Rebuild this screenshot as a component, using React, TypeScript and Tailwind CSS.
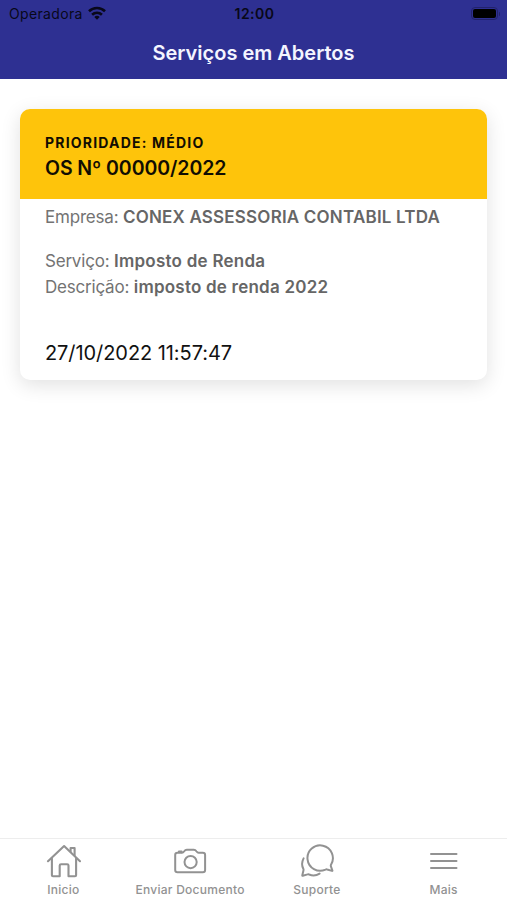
import React from "react"

const tabs = [
    { label: "Inicio", icon: <HomeIcon /> },
    { label: "Enviar Documento", icon: <CameraIcon /> },
    { label: "Suporte", icon: <ChatIcon /> },
    { label: "Mais", icon: <MenuIcon /> },
]

function HomeIcon() {
    return (
        <svg width="36" height="36" viewBox="0 0 36 36" fill="none" stroke="currentColor" strokeWidth="2.1" strokeLinecap="round" strokeLinejoin="round">
            <path d="M3 18.2 19.1 3 35 18.2" />
            <path d="M25.6 8.5V5h4v7.5" />
            <path d="M6.9 15.5v16.7c0 .7.4 1.1 1.1 1.1h6.7V22.6c0-.9.5-1.4 1.4-1.4h6c.9 0 1.4.5 1.4 1.4v10.7h6.5c.7 0 1.1-.4 1.1-1.1V15.5" />
        </svg>
    )
}

function CameraIcon() {
    return (
        <svg width="36" height="36" viewBox="0 0 36 36" fill="none" stroke="currentColor" strokeWidth="2" strokeLinecap="round" strokeLinejoin="round">
            <path d="M5.5 9.8h4.5c1.1 0 1.5-.5 2.2-1.5.8-1.2 1.4-1.6 2.6-1.6h7c1.2 0 1.8.4 2.6 1.6.7 1 1.1 1.5 2.2 1.5h4.2c1.5 0 2.3.8 2.3 2.3v14.8c0 1.5-.8 2.3-2.3 2.3H5.5c-1.5 0-2.3-.8-2.3-2.3V12.1c0-1.5.8-2.3 2.3-2.3Z" />
            <path d="M6.9 9.2V8.5h2.7v.7" />
            <circle cx="18.6" cy="19.1" r="6.1" />
        </svg>
    )
}

function ChatIcon() {
    return (
        <svg width="36" height="36" viewBox="0 0 36 36" fill="none" stroke="currentColor" strokeWidth="2" strokeLinecap="round" strokeLinejoin="round">
            <path d="M32 21.7a12.7 12.7 0 1 0-5.5 4.9c.6-.3 1.1-.3 1.7-.1l4.8 1.4c.3.1.5-.1.4-.4l-1.5-4.2c-.2-.6-.2-1 .1-1.6Z" />
            <path d="M4.6 15.4c-1.700 3.300-1.900 7.200-.3 10.300.3.600.4 1 .2 1.600L3.300 32.300c-.1.400.1.600.5.500l4.700-1.400c.6-.2 1.100-.2 1.700.1 3.400 1.400 7.200 1.100 10.400-.9" />
        </svg>
    )
}

function MenuIcon() {
    return (
        <svg width="36" height="36" viewBox="0 0 36 36" fill="none" stroke="currentColor" strokeWidth="2" strokeLinecap="round">
            <path d="M5 11h25.5M5 18h25.5M5 25h25.5" />
        </svg>
    )
}

function WifiIcon() {
    return (
        <svg className="ml-[5px] -mt-[2px]" width="18" height="14" viewBox="0 0 18 14" fill="none" stroke="currentColor" strokeWidth="2.6">
            <path d="M1 5.3a11.5 11.5 0 0 1 16 0" />
            <path d="M4.1 8.7a7 7 0 0 1 9.8 0" />
            <path d="M9 13.8 6.3 11.1a3.8 3.8 0 0 1 5.4 0Z" fill="currentColor" stroke="none" />
        </svg>
    )
}

function StatusBar() {
    return (
        <div className="grid h-[27px] grid-cols-3 items-center pr-[7px] pl-[9px] text-[14px] text-[#080819]">
            <div className="flex items-center">
                <span className="tracking-[0.34px]">Operadora</span>
                <WifiIcon />
            </div>
            <span className="text-center font-semibold tracking-[0.45px]">12:00</span>
            {/* Bateria */}
            <div className="flex items-center justify-end">
                <div className="h-[13px] w-[27px] rounded-[4px] border border-[#22226c] p-px">
                    <div className="h-full rounded-[2px] bg-black" />
                </div>
                <div className="ml-px h-1 w-px rounded-r bg-[#22226c]" />
            </div>
        </div>
    )
}

export default function App() {
    return (
        <div className="flex h-[900px] flex-col bg-white font-['Inter',sans-serif]">
            <header className="h-[79px] shrink-0 bg-[#2e3092]">
                <StatusBar />
                <h1 className="pt-3 text-center text-[20px] leading-7 font-semibold text-[#f4f5ff]">
                    Serviços em Abertos
                </h1>
            </header>

            <main className="flex-1 pt-[30px] pr-[19.6px] pl-[20.4px]">
                <div className="h-[271px] overflow-hidden rounded-[10px] bg-white shadow-[0_5px_20px_rgba(0,0,0,0.12)]">
                    <div className="h-[90px] bg-[#fec40b] px-[24.6px] pt-6 text-[#110d02]">
                        <p className="text-[14px] leading-5 font-bold tracking-[1.2px]">PRIORIDADE: MÉDIO</p>
                        <h2 className="mt-[2px] text-[19.5px] leading-[26px] font-semibold tracking-[-0.07px]">OS Nº 00000/2022</h2>
                    </div>
                    <div className="px-[24.6px] pt-[5px] text-[17px] leading-[26px] tracking-[-0.2px] whitespace-nowrap text-[#737373]">
                        <p>
                            Empresa: <b className="font-semibold tracking-[0.2px] text-[#666]">CONEX ASSESSORIA CONTABIL LTDA</b>
                        </p>
                        <p className="mt-[18px]">
                            Serviço: <b className="font-semibold tracking-[0.25px] text-[#666]">Imposto de Renda</b>
                        </p>
                        <p>
                            Descrição: <b className="font-semibold tracking-[0.22px] text-[#666]">imposto de renda 2022</b>
                        </p>
                        <p className="mt-10 text-[20px] tracking-[-0.07px] text-[#111]">27/10/2022 11:57:47</p>
                    </div>
                </div>
            </main>

            <nav className="grid h-[62px] shrink-0 grid-cols-4 border-t border-[#ededed] pt-[4px] text-[#929292]">
                {tabs.map((tab) => (
                    <div key={tab.label} className="flex flex-col items-center">
                        {tab.icon}
                        <span className="mt-[3px] text-[12px] leading-4 font-medium tracking-[0.25px] whitespace-nowrap">{tab.label}</span>
                    </div>
                ))}
            </nav>
        </div>
    )
}
